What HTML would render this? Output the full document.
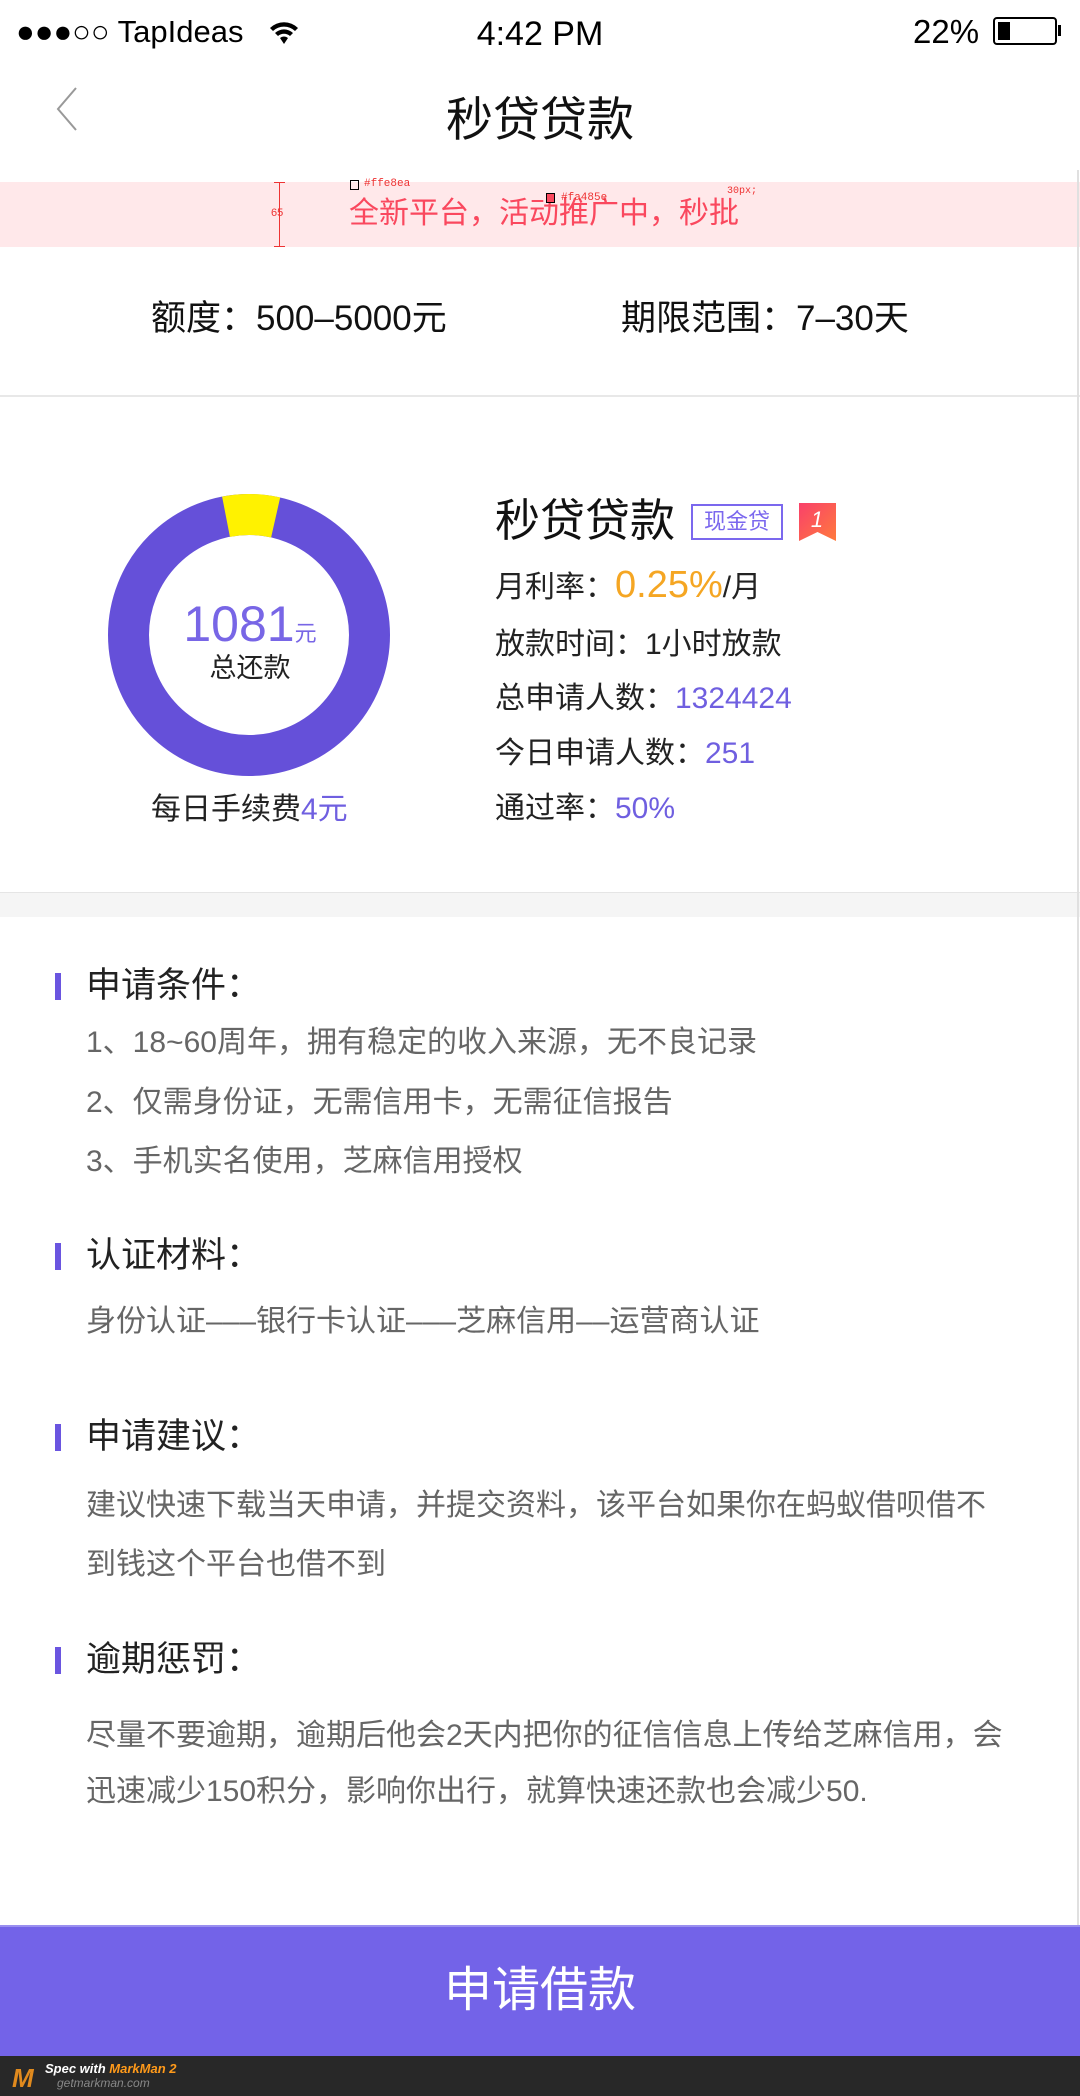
<!DOCTYPE html>
<html><head><meta charset="utf-8"><style>
*{margin:0;padding:0;box-sizing:border-box}
body{width:1080px;height:2096px;position:relative;background:#fff;font-family:"Liberation Sans","Noto Sans CJK SC",sans-serif;color:#222;overflow:hidden}
.a{position:absolute;white-space:nowrap}
.h{position:absolute;left:86px;font-size:35px;color:#222;line-height:40px}
.bar{position:absolute;left:55px;width:6px;height:27px;background:#6a55e0}
.t{position:absolute;left:86px;font-size:30px;color:#666;line-height:34px;white-space:nowrap}
.r{position:absolute;left:495px;font-size:30px;line-height:34px;color:#222;white-space:nowrap}
.p{color:#6f5fe0}
</style></head><body>
<!-- status bar -->
<div class="a" style="left:16px;top:14px;font-size:31px;line-height:36px;color:#000">●●●○○ TapIdeas</div>
<svg class="a" style="left:268px;top:18px" width="32" height="30" viewBox="0 0 32 30"><path d="M2 10 A20 20 0 0 1 30 10 L27 13 A16 16 0 0 0 5 13Z M7 15 A13 13 0 0 1 25 15 L22 18 A9 9 0 0 0 10 18Z M12 20 A6 6 0 0 1 20 20 L16 26Z" fill="#000"/></svg>
<div class="a" style="left:0;width:1080px;text-align:center;top:14px;font-size:34px;line-height:40px;color:#000">4:42 PM</div>
<div class="a" style="left:913px;top:12px;font-size:33px;line-height:40px;color:#000">22%</div>
<div class="a" style="left:993px;top:17px;width:64px;height:28px;border:2px solid #000;border-radius:4px"><div style="position:absolute;left:3px;top:3px;width:12px;height:18px;background:#000"></div></div>
<div class="a" style="left:1058px;top:25px;width:3px;height:11px;background:#000"></div>
<!-- nav -->
<svg class="a" style="left:54px;top:86px" width="26" height="46" viewBox="0 0 26 46"><path d="M22 2 L4 23 L22 44" fill="none" stroke="#999" stroke-width="2"/></svg>
<div class="a" style="left:0;width:1080px;text-align:center;top:92px;font-size:47px;line-height:56px;color:#111">秒贷贷款</div>
<!-- pink band -->
<div class="a" style="left:0;top:182px;width:1080px;height:65px;background:#ffe8ea"></div>
<div class="a" style="left:349px;top:196px;font-size:30px;line-height:36px;color:#fa485e">全新平台，活动推广中，秒批</div>
<div class="a" style="left:279px;top:182px;width:1px;height:65px;background:#e33"></div>
<div class="a" style="left:274px;top:182px;width:11px;height:1px;background:#e33"></div>
<div class="a" style="left:274px;top:246px;width:11px;height:1px;background:#e33"></div>
<div class="a" style="left:271px;top:207px;font-size:11px;color:#e33">65</div>
<div class="a" style="left:350px;top:180px;width:9px;height:10px;border:1px solid #000"></div>
<div class="a" style="left:364px;top:178px;font-size:11px;color:#e33;font-family:'Liberation Mono',monospace">#ffe8ea</div>
<div class="a" style="left:546px;top:193px;width:9px;height:10px;border:1px solid #000;background:#fa485e"></div>
<div class="a" style="left:561px;top:192px;font-size:11px;color:#e33;font-family:'Liberation Mono',monospace">#fa485e</div>
<div class="a" style="left:727px;top:186px;font-size:10px;color:#e33;font-family:'Liberation Mono',monospace">30px;</div>
<!-- limits -->
<div class="a" style="left:151px;top:299px;font-size:35px;line-height:40px;color:#111">额度：500–5000元</div>
<div class="a" style="left:621px;top:299px;font-size:35px;line-height:40px;color:#111">期限范围：7–30天</div>
<div class="a" style="left:0;top:395px;width:1080px;height:2px;background:#e8e8e8"></div>
<!-- ring -->
<svg class="a" style="left:100px;top:486px" width="300" height="300" viewBox="0 0 300 300">
<circle cx="149" cy="149" r="120.5" fill="none" stroke="#6550d9" stroke-width="41"/>
<circle cx="149" cy="149" r="120.5" fill="none" stroke="#fff200" stroke-width="41" stroke-dasharray="50 800" transform="rotate(-101 149 149)"/>
</svg>
<div class="a" style="left:150px;width:200px;text-align:center;top:596px;line-height:56px;color:#7866e6"><span style="font-size:50px">1081</span><span style="font-size:22px">元</span></div>
<div class="a" style="left:150px;width:200px;text-align:center;top:652px;font-size:27px;line-height:32px;color:#222">总还款</div>
<div class="a" style="left:151px;top:792px;font-size:30px;line-height:36px;color:#222">每日手续费<span class="p">4元</span></div>
<!-- right info -->
<div class="a" style="left:495px;top:494px;font-size:45px;line-height:54px;color:#111">秒贷贷款</div>
<div class="a" style="left:691px;top:504px;width:92px;height:36px;border:2px solid #7b68ee;color:#7b68ee;font-size:22px;line-height:32px;text-align:center">现金贷</div>
<svg class="a" style="left:799px;top:503px" width="37" height="38" viewBox="0 0 37 38"><defs><linearGradient id="g" x1="0" y1="0" x2="1" y2="1"><stop offset="0" stop-color="#f9406a"/><stop offset="1" stop-color="#ff7a3d"/></linearGradient></defs><path d="M0 0H37V38L18.5 29L0 38Z" fill="url(#g)"/><text x="18" y="24" font-size="22" fill="#fff" text-anchor="middle" font-style="italic" font-family="Liberation Sans">1</text></svg>
<div class="r" style="top:568px">月利率：<span style="color:#f5a623;font-size:38px">0.25%</span>/月</div>
<div class="r" style="top:628px">放款时间：1小时放款</div>
<div class="r" style="top:682px">总申请人数：<span class="p">1324424</span></div>
<div class="r" style="top:737px">今日申请人数：<span class="p">251</span></div>
<div class="r" style="top:792px">通过率：<span class="p">50%</span></div>
<div class="a" style="left:0;top:892px;width:1080px;height:25px;background:#f5f5f5;border-top:1px solid #e5e5e5"></div>
<!-- sections -->
<div class="bar" style="top:973px"></div><div class="h" style="top:966px">申请条件：</div>
<div class="t" style="top:1026px">1、18~60周年，拥有稳定的收入来源，无不良记录</div>
<div class="t" style="top:1086px">2、仅需身份证，无需信用卡，无需征信报告</div>
<div class="t" style="top:1145px">3、手机实名使用，芝麻信用授权</div>
<div class="bar" style="top:1243px"></div><div class="h" style="top:1236px">认证材料：</div>
<div class="t" style="top:1305px">身份认证–––银行卡认证–––芝麻信用––运营商认证</div>
<div class="bar" style="top:1424px"></div><div class="h" style="top:1417px">申请建议：</div>
<div class="t" style="top:1489px">建议快速下载当天申请，并提交资料，该平台如果你在蚂蚁借呗借不</div>
<div class="t" style="top:1548px">到钱这个平台也借不到</div>
<div class="bar" style="top:1647px"></div><div class="h" style="top:1640px">逾期惩罚：</div>
<div class="t" style="top:1719px">尽量不要逾期，逾期后他会2天内把你的征信信息上传给芝麻信用，会</div>
<div class="t" style="top:1775px">迅速减少150积分，影响你出行，就算快速还款也会减少50.</div>
<!-- right edge line -->
<div class="a" style="left:1077px;top:170px;width:2px;height:1755px;background:#e0e0e0"></div>
<!-- button -->
<div class="a" style="left:0;top:1925px;width:1080px;height:131px;background:#7363e8;border-top:2px solid #9a8ff0;color:#fff;font-size:48px;line-height:128px;text-align:center">申请借款</div>
<div class="a" style="left:0;top:2056px;width:1080px;height:40px;background:#282828"></div>
<div class="a" style="left:12px;top:2064px;width:28px;height:28px;color:#e08a1e;font-size:26px;font-weight:bold;line-height:28px;font-style:italic">M</div>
<div class="a" style="left:45px;top:2061px;font-size:13px;line-height:15px;color:#fff;font-style:italic;font-weight:bold">Spec with <span style="color:#ff9a1a">MarkMan 2</span></div>
<div class="a" style="left:57px;top:2076px;font-size:12px;line-height:14px;color:#888;font-style:italic">getmarkman.com</div>
</body></html>
